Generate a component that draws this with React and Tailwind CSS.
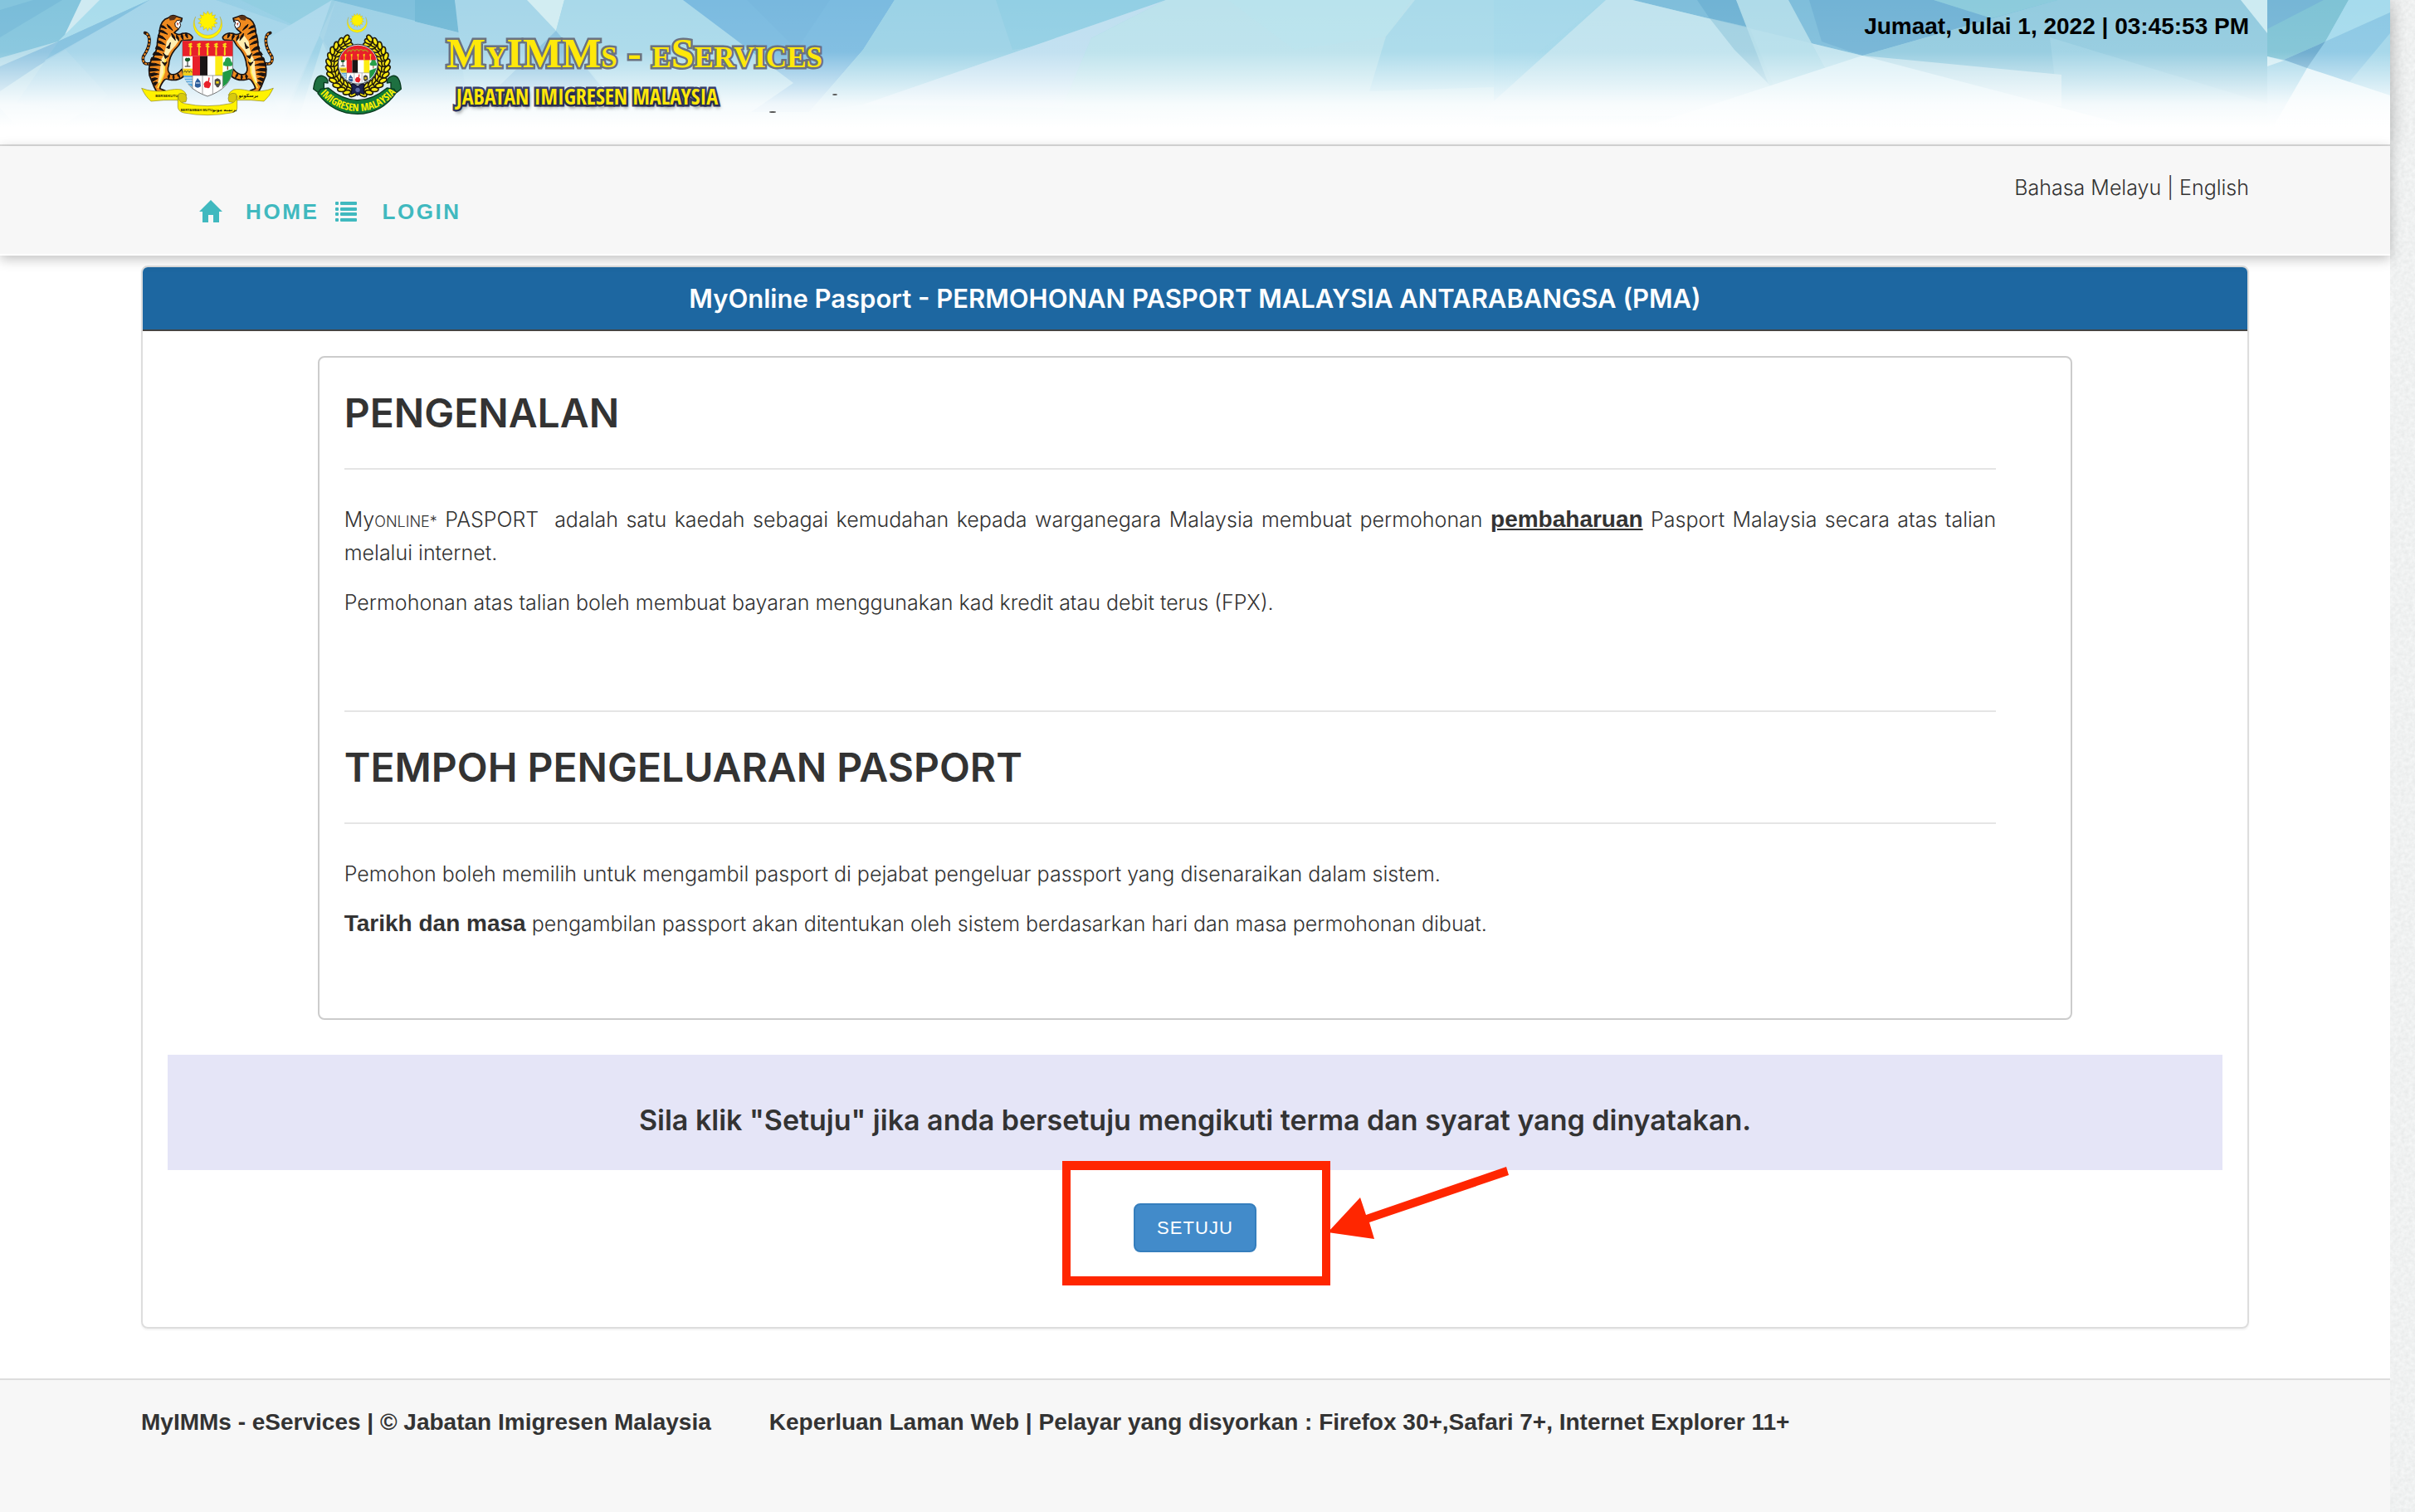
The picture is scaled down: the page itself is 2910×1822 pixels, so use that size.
import React from "react";

const SANS = "font-['Liberation_Sans',Arial,sans-serif]";
const LIGHT = "font-['Inter','Liberation_Sans',sans-serif] font-light";
const HEADING = "font-['Inter','Liberation_Sans',sans-serif] font-semibold";

function BannerArt() {
  return (
    <svg
      className="absolute inset-0 h-full w-full"
      viewBox="0 0 2880 174"
      preserveAspectRatio="xMinYMin slice"
      aria-hidden="true"
    >
      <defs>
        <linearGradient id="fade" x1="0" y1="0" x2="0" y2="1">
          <stop offset="0" stopColor="#fff" stopOpacity="0" />
          <stop offset="0.36" stopColor="#fff" stopOpacity="0.06" />
          <stop offset="0.58" stopColor="#fff" stopOpacity="0.55" />
          <stop offset="0.72" stopColor="#fff" stopOpacity="0.88" />
          <stop offset="0.88" stopColor="#fff" stopOpacity="1" />
        </linearGradient>
        <linearGradient id="sky" x1="0" y1="0" x2="1" y2="0">
          <stop offset="0" stopColor="#8fc9e2" />
          <stop offset="0.2" stopColor="#9fd5e9" />
          <stop offset="0.5" stopColor="#b4e0ec" />
          <stop offset="0.64" stopColor="#a4d8ea" />
          <stop offset="1" stopColor="#8fcbe0" />
        </linearGradient>
      </defs>
      <rect width="2880" height="174" fill="url(#sky)" />
      {/* left facets */}
      <polygon points="0,0 120,0 70,50 0,70" fill="#84c5dd" />
      <polygon points="0,12 40,0 75,0 0,45" fill="#79bcd9" />
      <polygon points="0,70 70,50 130,115 40,174 0,130" fill="#b4dcea" />
      <polygon points="98,0 128,0 78,42" fill="#cfeaf2" />
      <polygon points="120,0 180,0 70,50" fill="#a9dcec" />
      <polygon points="180,0 70,50 0,80 0,110 45,80" fill="#7cb8dc" opacity="0.7" />
      <polygon points="180,0 260,0 385,43 330,174 20,124 70,50" fill="#a7d6ea" opacity="0.8" />
      <polygon points="180,0 70,50 55,72 140,24" fill="#6fb5d8" opacity="0.6" />
      <polygon points="205,0 405,0 385,45 290,0" fill="#8fcde0" opacity="0.7" />
      <polygon points="405,0 350,174 480,174 385,43" fill="#c3e4f0" opacity="0.6" />
      <polygon points="400,0 520,0 520,30" fill="#7fc0dc" />
      <polygon points="400,0 385,43 340,140 300,60" fill="#add9ec" />
      <polygon points="500,0 548,0 556,40 500,26" fill="#72b9d6" />
      <polygon points="385,43 400,0 500,26 556,40 565,120 430,140" fill="#9fd0e6" opacity="0.7" />
      <polygon points="548,0 640,0 670,37 650,174 568,174" fill="#a6d6e9" />
      <polygon points="635,0 680,0 670,37" fill="#d2edf2" />
      <polygon points="680,0 823,0 956,100 905,135 740,120 670,37" fill="#a9d9ea" />
      <polygon points="670,37 725,105 600,105" fill="#84bede" opacity="0.8" />
      <polygon points="823,0 1078,0 1040,60 975,135 905,135 956,100" fill="#7bbbe0" />
      <polygon points="900,0 1000,0 960,60" fill="#6fb2dc" opacity="0.3" />
      <polygon points="1078,0 1405,0 1040,126 975,135 1040,60" fill="#9bd2e6" />
      <polygon points="1200,0 1405,0 1315,46 1220,60" fill="#8acbe2" opacity="0.5" />
      <polygon points="1405,0 1315,46 1280,130 1040,126" fill="#bfdff0" />
      <polygon points="1405,0 1800,0 1800,174 1280,130 1315,46" fill="#bbe2ec" />
      <polygon points="1480,0 1700,0 1670,44 1560,60" fill="#b7e5ee" opacity="0.6" />
      <polygon points="1705,0 1935,0 1870,50 1800,105 1650,110 1670,44" fill="#a5d8ea" opacity="0.8" />
      {/* right facets */}
      <polygon points="1967,0 2480,0 2244,67" fill="#7fbedb" />
      <polygon points="2180,0 2330,0 2400,22 2244,67 2195,50" fill="#6fb0d3" opacity="0.8" />
      <polygon points="1935,0 1967,0 2244,67 2400,140 1780,140" fill="#c0e3ee" />
      <polygon points="2045,0 2092,0 2108,33 2060,22" fill="#70b3d4" />
      <polygon points="2108,33 2140,110 2090,60 2060,22" fill="#9accdf" opacity="0.8" />
      <polygon points="2092,0 2155,0 2225,130 2142,130" fill="#b5deea" opacity="0.9" />
      <polygon points="2480,0 2700,0 2732,40 2732,140 2500,130 2244,67" fill="#93cbdf" />
      <polygon points="2470,45 2732,125 2732,174 2480,130" fill="#a3d4e6" opacity="0.7" />
      <polygon points="2330,0 2480,0 2400,22" fill="#8ccbdc" />
      <polygon points="2244,67 2484,90 2484,128 2420,126" fill="#c0e1ec" />
      <polygon points="2244,67 2560,150 1990,150" fill="#d8eff6" />
      <polygon points="2700,0 2732,0 2732,40" fill="#cdebf2" />
      {/* facets after the seam */}
      <polygon points="2732,0 2880,0 2880,174 2732,174" fill="#a3d6e9" />
      <polygon points="2732,0 2830,0 2802,50 2752,72 2732,68" fill="#7fc3d5" />
      <polygon points="2732,0 2800,0 2732,35" fill="#76b6d6" />
      <polygon points="2830,0 2880,0 2880,15 2802,50" fill="#a6dbed" />
      <polygon points="2802,50 2880,15 2880,40 2830,100 2780,82" fill="#8cc8e4" />
      <polygon points="2802,50 2752,72 2780,82" fill="#68a9cd" />
      <polygon points="2732,68 2752,73 2732,80" fill="#d2edf4" />
      <polygon points="2780,82 2880,115 2880,160 2735,160" fill="#dff2f8" />
      <rect width="2880" height="174" fill="url(#fade)" />
    </svg>
  );
}

function Tiger() {
  return (
    <g>
      <path d="M94 230Q62 236 68 205Q92 170 90 142Q88 122 74 119" fill="none" stroke="#1a1210" strokeWidth="11" strokeLinecap="round" />
      <path d="M94 230Q62 236 68 205Q92 170 90 142Q88 122 74 119" fill="none" stroke="#f08c22" strokeWidth="6" strokeDasharray="8 5" />
      <path
        d="M160 64Q172 50 190 60L208 66L205 78L190 76L188 92L200 96L194 106Q186 112 180 118Q195 130 208 121Q235 116 246 134Q246 146 232 145L206 147Q198 165 180 182Q162 205 160 235Q152 258 166 268Q186 276 208 250L214 276Q192 294 162 288Q146 282 142 292Q130 308 128 320L147 328Q130 336 116 331L106 312L90 272Q84 230 105 205Q114 190 118 168Q118 140 126 120Q128 84 146 70Z"
        fill="#ef8a1f"
        stroke="#1a1210"
        strokeWidth="5"
        strokeLinejoin="round"
      />
      <path d="M172 124Q180 142 198 144Q186 166 168 182Q148 208 146 250Q144 275 128 298L120 302Q132 250 130 220Q150 190 152 150Z" fill="#ffeeb0" />
      <path d="M150 205Q142 240 144 262Q136 285 120 318" fill="none" stroke="#ffe94a" strokeWidth="5" />
      <path
        d="M130 92Q142 90 152 104L132 98ZM126 108Q142 108 156 124L126 114ZM122 126Q138 128 150 144L122 134ZM120 146Q134 148 148 162L118 154ZM116 166Q132 170 142 184L112 176ZM108 188Q124 188 138 200L102 198ZM98 208Q118 208 134 218L94 218ZM90 228Q112 226 130 236L90 238ZM88 248Q110 244 126 254L90 258ZM92 266Q108 260 124 268L96 276ZM98 284Q110 278 120 284L102 294ZM104 300Q112 294 120 298L110 310ZM154 88Q168 96 174 110L158 98ZM170 120Q182 128 184 146L172 132ZM188 126Q198 134 196 148L188 136ZM206 120Q214 130 212 144L204 132ZM222 118Q230 126 228 138L220 128ZM152 172Q162 166 166 154L162 176ZM140 192Q150 206 160 202L148 212ZM136 224Q146 232 154 224L146 238ZM162 268Q166 276 160 286L156 276ZM178 270Q182 280 178 288L174 278ZM192 264Q200 272 200 282L192 274Z"
        fill="#1a1210"
        stroke="#1a1210"
        strokeWidth="3"
        strokeLinejoin="round"
      />
      <path d="M160 62Q170 52 190 60L180 72L164 74Z" fill="#5b3216" />
      <path d="M190 74L206 72L200 80L203 92L196 104L184 96L182 84Z" fill="#fff" stroke="#1a1210" strokeWidth="3" />
      <path d="M188 82L196 84L192 94Z" fill="#b1452c" />
    </g>
  );
}

function Keris({ x, y, s }) {
  return (
    <g transform={`translate(${x} ${y}) scale(${s})`}>
      <path d="M-9 -18L4 -24L8 -18L3 -14L9 -8L3 -5L4 22L0 26L-3 22L-2 -6L-9 -10L-3 -14Z" fill="#f7d917" />
    </g>
  );
}

function ShieldBody() {
  return (
    <g>
      <path d="M210 148H391V250Q385 320 300 348Q216 320 210 250Z" fill="#fff" stroke="#777" strokeWidth="3" />
      <path d="M210 148H391V203H210Z" fill="#e8202a" />
      {[238, 269, 300, 331, 362].map((x) => (
        <Keris key={x} x={x} y={177} s={0.95} />
      ))}
      <path d="M246 203H273V273H246Z" fill="#e8202a" />
      <path d="M273 203H300V273H273Z" fill="#191516" />
      <path d="M300 203H328V273H300Z" fill="#fff" />
      <path d="M328 203H355V273H328Z" fill="#fdec13" />
      <path d="M211 248H246V273H211Z" fill="#f2cf1b" />
      <path d="M214 262q5-12 10 0q5-12 10 0q5-12 10 0" fill="none" stroke="#222" strokeWidth="2" />
      <path d="M213 273H246V315Q220 300 213 273Z" fill="#5aa9de" />
      <path d="M216 282H246M220 291H246M226 300H246" stroke="#fff" strokeWidth="3" />
      <path d="M228 218V240M218 240H238" stroke="#222" strokeWidth="3" />
      <path d="M218 216q4-10 10-6q8-4 10 6q-4 8-10 6q-8 2-10-6Z" fill="#175b2b" />
      <path d="M355 262L391 248Q386 295 355 315Z" fill="#1f9a45" />
      <path d="M373 226V252" stroke="#8b4d1b" strokeWidth="4" />
      <path d="M357 236q-2-12 6-14q0-14 10-14q12 0 12 14q8 4 4 16q-16 4-32-2Z" fill="#27a04b" />
      <path d="M246 273H355M246 273V322M282 273V342M319 273V342M355 273V318" stroke="#777" strokeWidth="2" fill="none" />
      <path d="M264 282l10 12l2 18q-12 10-22 0l2-16Z" fill="#2d5d9b" />
      <path d="M258 300h14" stroke="#fff" strokeWidth="3" />
      <path d="M290 298q6-8 12-4l2-14l4 1l-2 16q10 2 4 14q-4 12-12 6q-12 2-10-8q-4-4 2-11Z" fill="#e8202a" />
      <path d="M326 288l10-5l10 5l2 14l-8 14h-6l-8-12Z" fill="#4d4a45" />
      <path d="M331 294h10v8h-10Z" fill="#f7d917" />
    </g>
  );
}

function CrescentStar({ cx, cy, s }) {
  const pts = [];
  for (let i = 0; i < 28; i++) {
    const a = (i * Math.PI) / 14 - Math.PI / 2;
    const r = i % 2 ? 25 : 36;
    pts.push(`${(r * Math.cos(a)).toFixed(1)},${(r * Math.sin(a)).toFixed(1)}`);
  }
  return (
    <g transform={`translate(${cx} ${cy}) scale(${s})`} stroke="#a98f2a" strokeWidth="1">
      <path d="M-44 -16A52 52 0 1 0 44 -16A48 48 0 1 1 -44 -16Z" fill="#fff200" />
      <polygon points={pts.join(" ")} fill="#fff200" />
    </g>
  );
}

function MalaysiaCrest() {
  return (
    <svg className="h-[130px] w-[160px] shrink-0" viewBox="60 30 480 390" role="img" aria-label="Jata Negara Malaysia">
      <Tiger />
      <g transform="translate(601 0) scale(-1 1)">
        <Tiger />
      </g>
      <CrescentStar cx={301} cy={76} s={1} />
      <ShieldBody />
      <g fill="#fff200" stroke="#8d8520" strokeWidth="2" strokeLinejoin="round">
        <path d="M192 352Q190 336 212 332L222 345Q228 355 222 368L196 372Z" fill="#d8c90d" />
        <path d="M408 352Q410 336 388 332L378 345Q372 355 378 368L404 372Z" fill="#d8c90d" />
        <path d="M62 319Q100 334 150 328Q185 320 205 324Q220 330 225 345Q210 332 196 340L193 362Q140 360 96 366Q76 350 62 319Z" />
        <path d="M538 319Q500 334 450 328Q415 320 395 324Q380 330 375 345Q390 332 404 340L407 362Q460 360 504 366Q524 350 538 319Z" />
        <path d="M193 345Q194 368 215 374Q300 392 385 374Q406 368 407 345V392Q404 406 385 408Q300 424 215 408Q196 404 193 388Z" />
      </g>
      <g fontFamily="'Liberation Sans','DejaVu Sans',sans-serif" fontWeight="700" fill="#2b2808">
        <text x="112" y="352" fontSize="13">BERSEKUTU</text>
        <text x="203" y="401" fontSize="12">BERTAMBAH MUTU</text>
        <text x="448" y="351" fontSize="17" textAnchor="middle">برسکوتو</text>
        <text x="362" y="401" fontSize="16" textAnchor="middle">برتمبه موتو</text>
      </g>
    </svg>
  );
}

const LEAVES = Array.from({ length: 13 }, (_, i) => i);

function WreathHalf() {
  return (
    <g>
      {LEAVES.map((i) => {
        const deg = 100 + i * 12.2;
        const a = (deg * Math.PI) / 180;
        return (
          <g key={i} fill="#f9e814" stroke="#211c0a" strokeWidth="5">
            {[82, 94, 106].map((r, k) => (
              <ellipse
                key={r}
                rx="14"
                ry="8"
                transform={`translate(${(845 + r * Math.cos(a)).toFixed(1)} ${(236 + r * Math.sin(a)).toFixed(1)}) rotate(${(deg + 90 + (k - 1) * -32).toFixed(1)})`}
              />
            ))}
          </g>
        );
      })}
    </g>
  );
}

function ImmigrationCrest() {
  return (
    <svg className="h-[130px] w-[113px] shrink-0" viewBox="673 30 339 390" role="img" aria-label="Imigresen Malaysia">
      <defs>
        <clipPath id="disc">
          <circle cx="845" cy="232" r="68" />
        </clipPath>
      </defs>
      <CrescentStar cx={842} cy={73} s={0.7} />
      <WreathHalf />
      <g transform="translate(1690 0) scale(-1 1)">
        <WreathHalf />
      </g>
      <circle cx="845" cy="232" r="72" fill="#cfe6f2" stroke="#333" strokeWidth="3" />
      <g clipPath="url(#disc)">
        <rect x="770" y="160" width="150" height="150" fill="#b9dcec" />
        <g transform="translate(617 56) scale(0.76)">
          <ShieldBody />
        </g>
        <rect x="770" y="160" width="150" height="57" fill="#e8202a" />
        {[800, 822, 845, 867, 890].map((x) => (
          <Keris key={x} x={x} y={206} s={0.5} />
        ))}
      </g>
      <path d="M806 188q8-12 14-2q6-12 14-2q8-10 14 0q8-10 16 0q8-8 18 4" fill="none" stroke="#b7941d" strokeWidth="4" />
      <path d="M820 306q12-6 24 6q12-12 24-6l-4 14l4 22l-14-6l-10 10l-10-10l-14 6l4-22Z" fill="#1b2350" stroke="#0c0f24" strokeWidth="3" />
      <circle cx="844" cy="325" r="8" fill="#5b6aa5" />
      <g fill="#1e7041" stroke="#0b3a20" strokeWidth="4" strokeLinejoin="round">
        <path d="M684 322Q690 270 716 274Q738 280 736 300L722 298L722 330L700 334Z" />
        <path d="M1001 322Q996 270 970 274Q948 280 950 300L964 298L964 330L986 334Z" />
        <path d="M710 322L738 318Q790 362 843 362Q898 362 950 318L976 322Q980 330 984 334Q930 412 843 412Q756 412 700 338Z" fill="#117a38" />
      </g>
      <path id="crestArc" d="M706 336Q764 402 843 402Q926 402 984 332" fill="none" />
      <text fontFamily="'Open Sans Condensed','Liberation Sans'" fontWeight="700" fontSize="37" fill="#fff200">
        <textPath href="#crestArc" startOffset="50%" textAnchor="middle">
          IMIGRESEN MALAYSIA
        </textPath>
      </text>
    </svg>
  );
}

function HomeIcon() {
  return (
    <svg className="h-7 w-7" viewBox="0 0 28 28" fill="currentColor" aria-hidden="true">
      <path d="M14 0L28 14H24V27H17V18H11V27H4V14H0Z" />
    </svg>
  );
}

function ListIcon() {
  return (
    <svg className="h-6 w-[26px]" viewBox="0 0 26 24" fill="currentColor" aria-hidden="true">
      {[0, 7, 13, 20].map((y) => (
        <g key={y}>
          <rect x="0" y={y} width="4" height="4" rx="1" />
          <rect x="6" y={y} width="20" height="4" rx="1" />
        </g>
      ))}
    </svg>
  );
}

function SideTexture() {
  return (
    <div className="relative w-[30px] shrink-0 overflow-hidden bg-[#e9ebeb]">
      <svg className="absolute inset-0 h-full w-full" aria-hidden="true">
        <filter id="paper">
          <feTurbulence type="fractalNoise" baseFrequency="0.22" numOctaves="2" />
          <feColorMatrix values="0 0 0 0 0.99  0 0 0 0 1  0 0 0 0 1  0.9 0 0 0 -0.15" />
        </filter>
        <rect width="100%" height="100%" filter="url(#paper)" />
      </svg>
    </div>
  );
}

function Rule() {
  return <hr className="my-10 border-t-2 border-[#e5e5e5]" />;
}

function SectionTitle({ children }) {
  return <h2 className={`${HEADING} text-5xl leading-[53px]`}>{children}</h2>;
}

function Strong({ children }) {
  return <b className="font-['Liberation_Sans',sans-serif] text-[28px] leading-none font-bold">{children}</b>;
}

export default function App() {
  return (
    <div className={`${SANS} flex min-h-screen text-[28px] leading-10 text-[#333]`}>
      <div className="relative z-10 flex min-w-0 flex-1 flex-col bg-white">
        <header className="relative h-44 border-b-2 border-[#ddd] shadow-[0_2px_20px_rgba(0,0,0,0.3)]">
          <BannerArt />
          <div className="relative flex items-start px-[170px] pt-[10px]">
            <MalaysiaCrest />
            <div className="w-11 shrink-0" />
            <ImmigrationCrest />
            <div className="relative ml-[51px] pt-6">
              <h1 className="font-['Liberation_Serif',serif] text-[50px] leading-[60px] font-bold whitespace-nowrap text-[#ffe80a] [font-variant-caps:small-caps] [paint-order:stroke_fill] [-webkit-text-stroke:5px_#6b7280]">
                MyIMMs - eServices
              </h1>
              <p className="pt-1 pl-3 font-['Open_Sans_Condensed','Roboto_Condensed',sans-serif] text-[26px] leading-9 font-bold whitespace-nowrap text-[#ffe80a] [paint-order:stroke_fill] [text-shadow:2px_4px_4px_rgba(0,0,0,0.5)] [-webkit-text-stroke:5px_#39406b]">
                JABATAN IMIGRESEN MALAYSIA
              </p>
              <svg className="absolute top-[102px] left-[376px] h-6 w-24 max-w-none" viewBox="0 0 96 24" fill="#555" aria-hidden="true">
                <ellipse cx="17" cy="23" rx="4" ry="1" />
                <ellipse cx="92" cy="2" rx="3" ry="1" />
              </svg>
            </div>
            <time className="ml-auto pt-[2px] font-bold whitespace-nowrap text-black">Jumaat, Julai 1, 2022 | 03:45:53 PM</time>
          </div>
        </header>

        <nav className="relative flex h-[132px] items-start justify-between border-b-2 border-white bg-[#f7f7f7] px-[170px] shadow-[0_4px_14px_rgba(0,0,0,0.25)]">
          <div className="flex gap-5 pt-[59px] pl-[70px] text-[26px] font-bold tracking-widest text-[#40b9bf]">
            <a href="#home" className="flex items-center gap-7">
              <HomeIcon />
              HOME
            </a>
            <a href="#login" className="flex items-center gap-[30px]">
              <ListIcon />
              LOGIN
            </a>
          </div>
          <p className={`${LIGHT} pt-[30px] text-[25px] text-[#333]`}>
            <a href="#ms">Bahasa Melayu</a> | <a href="#en">English</a>
          </p>
        </nav>

        <main className="mx-[170px] mt-3 mb-[60px] rounded-lg border-2 border-[#ddd] shadow-[0_2px_2px_rgba(0,0,0,0.05)]">
          <h3 className={`${HEADING} rounded-t-md border-b-2 border-[#444] bg-[#1d67a1] pt-[18px] pb-[17px] text-center text-[31px] leading-10 text-white`}>
            MyOnline Pasport - PERMOHONAN PASPORT MALAYSIA ANTARABANGSA (PMA)
          </h3>
          <div className="px-[30px] pt-[30px] pb-[90px]">
            <section className={`${LIGHT} mx-auto w-[85.4%] rounded-lg border-2 border-[#ccc] pt-10 pr-[90px] pb-[94px] pl-[30px] text-[25px] leading-10`}>
              <SectionTitle>PENGENALAN</SectionTitle>
              <Rule />
              <p className="mb-5 text-justify">
                My<span className="text-[18px] leading-none">ONLINE*</span> PASPORT &nbsp;adalah satu kaedah sebagai kemudahan
                kepada warganegara Malaysia membuat permohonan{" "}
                <u>
                  <Strong>pembaharuan</Strong>
                </u>{" "}
                Pasport Malaysia secara atas talian melalui internet.
              </p>
              <p className="mb-[110px]">
                Permohonan atas talian boleh membuat bayaran menggunakan kad kredit atau debit terus (FPX).
              </p>
              <Rule />
              <SectionTitle>TEMPOH PENGELUARAN PASPORT</SectionTitle>
              <Rule />
              <p className="mb-5">
                Pemohon boleh memilih untuk mengambil pasport di pejabat pengeluar passport yang disenaraikan dalam sistem.
              </p>
              <p>
                <Strong>Tarikh dan masa</Strong> pengambilan passport akan ditentukan oleh sistem berdasarkan hari dan masa
                permohonan dibuat.
              </p>
            </section>

            <p className={`${HEADING} mt-[42px] bg-[#e5e5f7] pt-[54px] pb-[35px] text-center text-[34px] leading-[50px]`}>
              Sila klik &quot;Setuju&quot; jika anda bersetuju mengikuti terma dan syarat yang dinyatakan.
            </p>

            <div className="mt-10 flex justify-center">
              <div className="relative">
                <button
                  type="button"
                  className="block h-[59px] w-[148px] rounded-lg border-2 border-[#357ebd] bg-[#428bca] text-[22px] tracking-wider text-white"
                >
                  SETUJU
                </button>
                <svg
                  className="pointer-events-none absolute -top-[51px] -left-[86px] h-[150px] w-[540px] max-w-none"
                  viewBox="0 0 540 150"
                  fill="#ff2600"
                  aria-hidden="true"
                >
                  <path fillRule="evenodd" d="M0 0H323V150H0ZM10 11V139H313V11Z" />
                  <path d="M320 86L359 44L366 65L535 7L538 17L370 74L376 94Z" />
                </svg>
              </div>
            </div>
          </div>
        </main>

        <footer className="flex flex-1 gap-[70px] border-t-2 border-[#ddd] bg-[#f7f7f7] px-[170px] pt-[31px] font-bold">
          <p>MyIMMs - eServices | © Jabatan Imigresen Malaysia</p>
          <p>Keperluan Laman Web | Pelayar yang disyorkan : Firefox 30+,Safari 7+, Internet Explorer 11+</p>
        </footer>
      </div>
      <SideTexture />
    </div>
  );
}
